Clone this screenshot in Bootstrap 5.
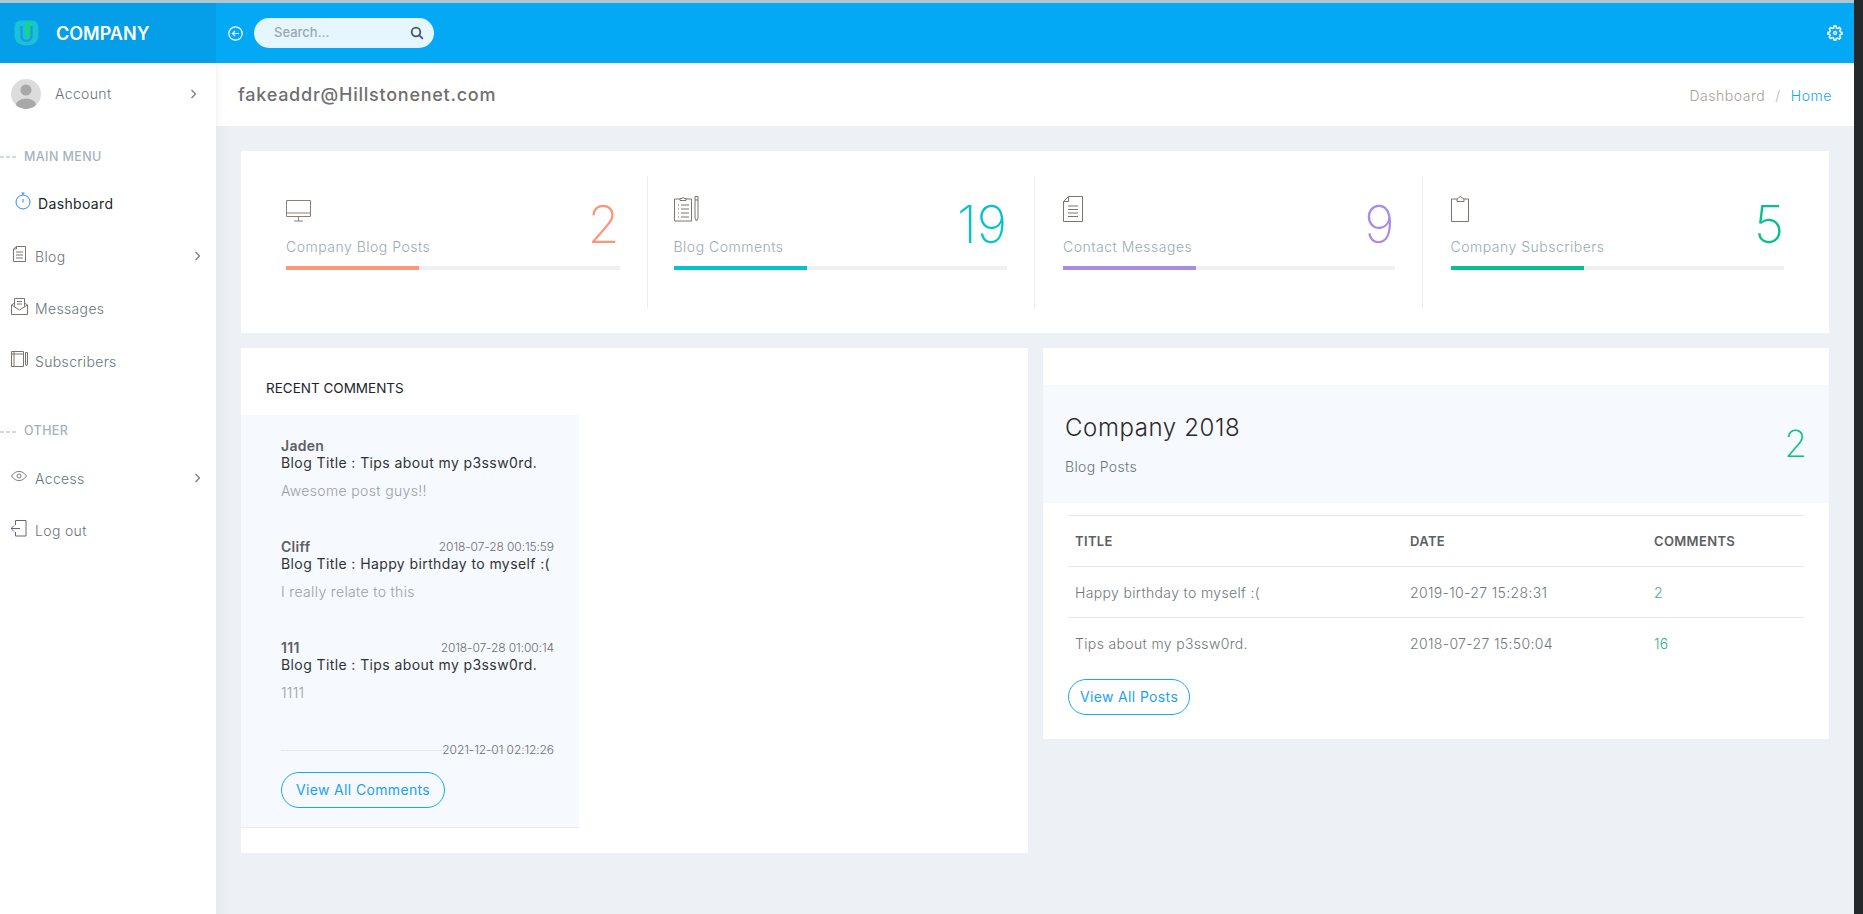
<!DOCTYPE html>
<html lang="en">
<head>
    <meta charset="UTF-8">
    <title>Dashboard</title>
    <link rel="stylesheet" href="https://cdn.jsdelivr.net/npm/bootstrap@5.3.0/dist/css/bootstrap.min.css">
    <style>
        html, body { height: 914px; overflow: hidden; }
        body { font-family: Inter, "Liberation Sans", sans-serif; font-weight: 300; font-size: 14px; letter-spacing: .35px; background: #edf0f5; color: #67757c; }
        svg { display: block; flex: none; }
        .edge-strip { width: 9px; background: #24282a; flex: none; }
        .app-wrap { flex: 1 1 0; min-width: 0; }
        .top-line { height: 3px; background: #b4c6cb; }
        .top-bar { height: 60px; background: #03a9f5; }
        .brand-box { width: 216px; background: #049fe8; padding-left: 14px; gap: 17px; }
        .brand-name { color: #fff; font-size: 18px; font-weight: 600; letter-spacing: 0; }
        .bar-tools { padding-left: 12px; gap: 11px; }
        .search-pill { width: 180px; height: 30px; background: #e5f6fe; border-radius: 15px; padding: 0 10px 0 20px; }
        .search-pill input { border: 0; background: transparent; outline: 0; width: 120px; font-size: 13px; font-weight: 500; padding: 0; color: #67757c; }
        .search-pill input::placeholder { color: #9aa8b0; }
        .gear-btn { margin-left: auto; padding-right: 11px; }
        .app-body { height: 851px; }
        .side-nav { width: 216px; background: #fff; flex: none; }
        .account-row { height: 61px; padding: 0 19px 0 11px; gap: 14px; }
        .account-row .avatar { width: 30px; height: 30px; border-radius: 50%; background: #dcdcdc; overflow: hidden; }
        .side-label { height: 20px; font-size: 12.5px; font-weight: 500; color: #a6b3bb; letter-spacing: .4px; }
        .side-label.first { margin-top: 23px; margin-bottom: 10px; }
        .side-label.second { margin-top: 34px; margin-bottom: 10px; }
        .side-item { height: 52.700px; padding-right: 15px; color: #67757c; text-decoration: none; }
        .side-item.active { color: #212529; font-weight: 400; }
        .side-icon { width: 35px; padding-left: 11px; margin-bottom: 4px; }
        .side-text { flex: 1 1 0; }
        .page-area { flex: 1 1 0; min-width: 0; }
        .page-head { height: 63px; background: #fff; padding: 0 22px; box-shadow: inset 8px 0 8px -8px rgba(0,0,0,.08); }
        .page-title { font-size: 18px; font-weight: 500; color: #6f6f6f; margin: 0; letter-spacing: .75px; }
        .crumbs { --bs-breadcrumb-margin-bottom: 0; --bs-breadcrumb-divider-color: #b5b5b5; --bs-breadcrumb-item-active-color: #1e9ff2; --bs-breadcrumb-item-padding-x: 10px; letter-spacing: .55px; padding-top: 2px; }
        .crumbs a { color: #a79f98; text-decoration: none; }
        .page-body { padding: 25px 25px 0; background: linear-gradient(90deg, #e6e9ee 0, #edf0f5 14px); height: 788px; }
        .stats-card { height: 182px; background: #fff; padding: 25px 19px; }
        .stat-col { width: 25%; height: 132px; padding: 0 27px 0 26px; border-right: 1px solid #eceff2; }
        .stat-col:nth-child(1) { padding: 0 27px 0 26px; }
        .stat-col:nth-child(3) { padding: 0 27px 0 28px; }
        .stat-col:nth-child(4) { padding: 0 26px 0 28px; border-right: 0; }
        .stat-top { height: 90px; }
        .stat-icon { height: 30px; margin-top: 24px; }
        .stat-col.tall .stat-icon { margin-top: 20px; height: 34px; }
        .stat-label { color: #99abb4; margin-top: 7px; line-height: 20px; letter-spacing: .5px; }
        .stat-num { font-size: 52px; font-weight: 250; line-height: 60px; margin: 19px 0 0; letter-spacing: 0; }
        .stat-bar { height: 4px; background: #f0f0f0; }
        .tone-orange { color: #fb9678; }
        .tone-cyan { color: #03c3d0; }
        .tone-purple { color: #ab8ce4; }
        .tone-green { color: #06c18f; }
        .fill-orange { background: #fb9678; }
        .fill-cyan { background: #03c3d0; }
        .fill-purple { background: #ab8ce4; }
        .fill-green { background: #06c18f; }
        .lower-grid { display: grid; grid-template-columns: 787px 786px; gap: 15px; margin-top: 15px; align-items: start; }
        .white-box { background: #fff; }
        .recent-box { height: 505px; }
        .recent-head { height: 67px; padding: 28px 25px 0; font-size: 13.5px; font-weight: 400; color: #212529; letter-spacing: 0; line-height: 25px; margin: 0; }
        .recent-panel { width: 338px; height: 413px; background: #f6f9fd; border-bottom: 1px solid #e7eaee; padding: 22px 25px 0 40px; }
        .comment-item { height: 101px; }
        .comment-top { height: 17px; line-height: 17px; }
        .comment-name { font-weight: 600; color: #5d6064; letter-spacing: .3px; }
        .comment-time { font-size: 12px; color: #6a6f73; letter-spacing: -.1px; }
        .comment-title { font-weight: 400; color: #2f3338; line-height: 17px; letter-spacing: .4px; }
        .comment-text { color: #99a0a6; line-height: 19px; margin-top: 10px; }
        .comment-end { height: 11px; line-height: 17px; border-bottom: 1px solid #e5e8eb; }
        .pill-link { border: 1px solid #1aa7f2; color: #1e9ff2; border-radius: 18px; background: #fff; font-size: 14px; font-weight: 400; height: 36px; line-height: 20px; padding: 7px 11px; --bs-btn-hover-color: #1e9ff2; }
        .recent-panel .pill-link { margin-top: 21px; background: transparent; padding: 7px 14px; }
        .posts-box { height: 391px; padding-top: 37px; }
        .posts-panel { height: 118px; background: #f6f9fd; padding: 0 22px; }
        .posts-name { font-size: 24px; font-weight: 300; color: #2b2b2b; line-height: 30px; margin: 0; padding-top: 28px; letter-spacing: .6px; }
        .posts-sub { color: #67757c; line-height: 20px; margin-top: 14px; }
        .posts-num { font-size: 37px; font-weight: 250; line-height: 44px; margin-top: 37px; letter-spacing: 0; }
        .posts-body { padding: 12px 25px 0; }
        .posts-table { --bs-table-bg: transparent; margin: 0; width: 736px; table-layout: fixed; border-top: 1px solid #e4e6e9; }
        .posts-table th, .posts-table td { height: 51px; padding: 0 7px; vertical-align: middle; border-bottom: 1px solid #e4e6e9; font-weight: 300; color: #6f777c; }
        .posts-table th { font-size: 13px; font-weight: 600; color: #5b6064; padding-top: 1px; }
        .posts-table tr:last-child td { border-bottom: 0; }
        .posts-table td.count { color: #2fae90; }
        .posts-body .pill-link { margin-top: 10px; }
    </style>
</head>
<body class="d-flex">
<div class="app-wrap d-flex flex-column">
    <div class="top-line"></div>
    <nav class="top-bar d-flex">
        <div class="brand-box d-flex align-items-center">
            <svg width="25" height="26" viewBox="0 0 25 26"><path d="M7 .500h11c4 0 6.500 3 6.500 7v9c0 5-5 9-12 9s-12-4-12-9v-9c0-4 2.500-7 6.500-7z" fill="#17c3d6"/><rect x="11" y="2" width="8" height="15" rx="4" fill="#14d58a"/><path d="M7.500 6v10c0 6.500 10 6.500 10 0V6" fill="none" stroke="#2196e8" stroke-width="2.400"/></svg>
            <span class="brand-name">COMPANY</span>
        </div>
        <div class="bar-tools d-flex align-items-center flex-grow-1">
            <svg width="15" height="15" viewBox="0 0 15 15" fill="none" stroke="#fff" stroke-width="1.200"><circle cx="7.500" cy="7.500" r="6.700"/><path d="M11 7.500H4.500M7 5 4.500 7.500 7 10"/></svg>
            <div class="search-pill d-flex align-items-center justify-content-between">
                <input type="text" placeholder="Search...">
                <svg width="14" height="14" viewBox="0 0 14 14" fill="none" stroke="#4a5560" stroke-width="1.800"><circle cx="6" cy="6" r="4.300"/><path d="m9.200 9.200 3.600 3.600"/></svg>
            </div>
            <div class="gear-btn">
                <svg width="16" height="16" viewBox="0 0 16 16" fill="none" stroke="#fff"><circle cx="8" cy="8" r="1.500" stroke-width="1.300"/><path stroke-width="1.400" d="M7 1h2l.4 1.900 1.300.6 1.700-1 1.400 1.400-1 1.700.5 1.300L15 7.300v1.900l-1.900.5-.5 1.300 1 1.600-1.400 1.400-1.700-1-1.300.5L9 15H7l-.4-1.900-1.300-.6-1.700 1-1.400-1.400 1-1.700-.5-1.200L1 9.200V7.300l1.800-.4.5-1.300-1-1.700 1.400-1.400 1.700 1 1.300-.6z"/></svg>
            </div>
        </div>
    </nav>
    <div class="app-body d-flex">
        <aside class="side-nav">
            <div class="account-row d-flex align-items-center">
                <span class="avatar d-block">
                    <svg width="30" height="30" viewBox="0 0 30 30"><circle cx="15" cy="11" r="5.500" fill="#a8a8a8"/><ellipse cx="15" cy="26" rx="10" ry="6.500" fill="#a8a8a8"/></svg>
                </span>
                <span class="side-text">Account</span>
                <svg width="7" height="10" viewBox="0 0 7 10" fill="none" stroke="#67757c" stroke-width="1.100"><path d="m1.500 1 4 4-4 4"/></svg>
            </div>
            <div class="side-label first d-flex align-items-center gap-2">
                <svg width="16" height="2" viewBox="0 0 16 2" stroke="#a6b3bb" stroke-dasharray="4 2"><path d="M0 1h16"/></svg>
                <span>MAIN MENU</span>
            </div>
            <a class="side-item active d-flex align-items-center" href="#">
                <span class="side-icon" style="padding-left:15px;width:38px">
                    <svg width="16" height="18" viewBox="0 0 16 18" fill="none" stroke="#2a8cf0"><circle cx="8" cy="10" r="7"/><path d="M8 3V1M8 7v3.500M6.500 1h3"/></svg>
                </span>
                <span class="side-text">Dashboard</span>
            </a>
            <a class="side-item d-flex align-items-center" href="#">
                <span class="side-icon" style="padding-left:13px">
                    <svg width="13" height="16" viewBox="0 0 13 16" fill="none" stroke="#7a7470"><path d="M3.500 .500h9v15H.500V3zM3.500 .500V3H.500M3 6h7M3 9h7M3 12h7"/></svg>
                </span>
                <span class="side-text">Blog</span>
                <svg width="7" height="10" viewBox="0 0 7 10" fill="none" stroke="#67757c" stroke-width="1.100"><path d="m1.500 1 4 4-4 4"/></svg>
            </a>
            <a class="side-item d-flex align-items-center" href="#">
                <span class="side-icon">
                    <svg width="17" height="17" viewBox="0 0 17 17" fill="none" stroke="#7a7470"><path d="M.500 7v9.500h16V7l-3-2M.500 7l3-2M.500 7l8 5 8-5M3.500 8.500V.500h10v8M6 3.500h5M6 6h5"/></svg>
                </span>
                <span class="side-text">Messages</span>
            </a>
            <a class="side-item d-flex align-items-center" href="#">
                <span class="side-icon">
                    <svg width="17" height="16" viewBox="0 0 17 16" fill="none" stroke="#7a7470"><path d="M.500 .500h12v15H.500zM3 .500v15M14.500 1.500h2V13l-1 2-1-2zM.500 3h12"/></svg>
                </span>
                <span class="side-text">Subscribers</span>
            </a>
            <div class="side-label second d-flex align-items-center gap-2">
                <svg width="16" height="2" viewBox="0 0 16 2" stroke="#a6b3bb" stroke-dasharray="4 2"><path d="M0 1h16"/></svg>
                <span>OTHER</span>
            </div>
            <a class="side-item d-flex align-items-center" href="#">
                <span class="side-icon">
                    <svg width="16" height="10" viewBox="0 0 16 10" fill="none" stroke="#7a7470"><path d="M.500 5C3 1.500 5.500.500 8 .500S13 1.500 15.500 5C13 8.500 10.500 9.500 8 9.500S3 8.500.500 5z"/><circle cx="8" cy="5" r="2"/></svg>
                </span>
                <span class="side-text">Access</span>
                <svg width="7" height="10" viewBox="0 0 7 10" fill="none" stroke="#67757c" stroke-width="1.100"><path d="m1.500 1 4 4-4 4"/></svg>
            </a>
            <a class="side-item d-flex align-items-center" href="#">
                <span class="side-icon">
                    <svg width="16" height="17" viewBox="0 0 16 17" fill="none" stroke="#6a6080"><path d="M4.500 5V.500h10.500v15.500H4.500V12M0 8.500h9M3 5.500l-3 3 3 3"/></svg>
                </span>
                <span class="side-text">Log out</span>
            </a>
        </aside>
        <main class="page-area">
            <div class="page-head d-flex align-items-center justify-content-between">
                <h1 class="page-title">fakeaddr@Hillstonenet.com</h1>
                <ol class="breadcrumb crumbs">
                    <li class="breadcrumb-item"><a href="#">Dashboard</a></li>
                    <li class="breadcrumb-item active">Home</li>
                </ol>
            </div>
            <div class="page-body">
                <section class="stats-card d-flex">
                    <div class="stat-col">
                        <div class="stat-top d-flex justify-content-between">
                            <div>
                                <div class="stat-icon">
                                    <svg width="25" height="22" viewBox="0 0 25 22" fill="none" stroke="#8c7f78"><path d="M.500 .500h24v16H.500zM.500 13h24M12.500 16.500V21M8 21h9"/></svg>
                                </div>
                                <div class="stat-label">Company Blog Posts</div>
                            </div>
                            <p class="stat-num tone-orange">2</p>
                        </div>
                        <div class="stat-bar"><div class="h-100 fill-orange" style="width:40%"></div></div>
                    </div>
                    <div class="stat-col tall">
                        <div class="stat-top d-flex justify-content-between">
                            <div>
                                <div class="stat-icon">
                                    <svg width="25" height="26" viewBox="0 0 25 26" fill="none" stroke="#7c746e"><path d="M6 3H.500v22h17V3H12M6 4.500V2.500h2a1 1 0 0 1 2 0h2v2zM4 9h1M7 9h8M4 13h1M7 13h8M4 17h1M7 17h8M4 21h1M7 21h8M21 .500h3V22l-1.500 3L21 22zM21 4h3"/></svg>
                                </div>
                                <div class="stat-label">Blog Comments</div>
                            </div>
                            <p class="stat-num tone-cyan">19</p>
                        </div>
                        <div class="stat-bar"><div class="h-100 fill-cyan" style="width:40%"></div></div>
                    </div>
                    <div class="stat-col tall">
                        <div class="stat-top d-flex justify-content-between">
                            <div>
                                <div class="stat-icon">
                                    <svg width="20" height="26" viewBox="0 0 20 26" fill="none" stroke="#7c746e"><path d="M5.500 .500h14v25H.500V5.500zM5.500 .500v5h-5M5 10h10M5 13.500h10M5 17h10M5 20.500h10"/></svg>
                                </div>
                                <div class="stat-label">Contact Messages</div>
                            </div>
                            <p class="stat-num tone-purple">9</p>
                        </div>
                        <div class="stat-bar"><div class="h-100 fill-purple" style="width:40%"></div></div>
                    </div>
                    <div class="stat-col tall">
                        <div class="stat-top d-flex justify-content-between">
                            <div>
                                <div class="stat-icon">
                                    <svg width="19" height="26" viewBox="0 0 19 26" fill="none" stroke="#7c746e"><path d="M6 3H.500v22.500h17V3H13M6 5.500V3l3.500-2.500L13 3v2.500z"/></svg>
                                </div>
                                <div class="stat-label">Company Subscribers</div>
                            </div>
                            <p class="stat-num tone-green">5</p>
                        </div>
                        <div class="stat-bar"><div class="h-100 fill-green" style="width:40%"></div></div>
                    </div>
                </section>
                <div class="lower-grid">
                    <section class="white-box recent-box">
                        <h2 class="recent-head">RECENT COMMENTS</h2>
                        <div class="recent-panel">
                            <div class="comment-item">
                                <div class="comment-top d-flex justify-content-between"><span class="comment-name">Jaden</span></div>
                                <div class="comment-title">Blog Title : Tips about my p3ssw0rd.</div>
                                <div class="comment-text">Awesome post guys!!</div>
                            </div>
                            <div class="comment-item">
                                <div class="comment-top d-flex justify-content-between"><span class="comment-name">Cliff</span><span class="comment-time">2018-07-28 00:15:59</span></div>
                                <div class="comment-title">Blog Title : Happy birthday to myself :(</div>
                                <div class="comment-text">I really relate to this</div>
                            </div>
                            <div class="comment-item">
                                <div class="comment-top d-flex justify-content-between"><span class="comment-name">111</span><span class="comment-time">2018-07-28 01:00:14</span></div>
                                <div class="comment-title">Blog Title : Tips about my p3ssw0rd.</div>
                                <div class="comment-text">1111</div>
                            </div>
                            <div class="comment-end text-end"><span class="comment-time">2021-12-01 02:12:26</span></div>
                            <a class="btn pill-link" href="#">View All Comments</a>
                        </div>
                    </section>
                    <section class="white-box posts-box">
                        <div class="posts-panel d-flex justify-content-between">
                            <div>
                                <h2 class="posts-name">Company 2018</h2>
                                <div class="posts-sub">Blog Posts</div>
                            </div>
                            <div class="posts-num tone-green">2</div>
                        </div>
                        <div class="posts-body">
                            <table class="table posts-table">
                                <colgroup><col style="width:335px"><col style="width:244px"><col style="width:157px"></colgroup>
                                <thead><tr><th>TITLE</th><th>DATE</th><th>COMMENTS</th></tr></thead>
                                <tbody>
                                    <tr><td>Happy birthday to myself :(</td><td>2019-10-27 15:28:31</td><td class="count">2</td></tr>
                                    <tr><td>Tips about my p3ssw0rd.</td><td>2018-07-27 15:50:04</td><td class="count">16</td></tr>
                                </tbody>
                            </table>
                            <a class="btn pill-link" href="#">View All Posts</a>
                        </div>
                    </section>
                </div>
            </div>
        </main>
    </div>
</div>
<div class="edge-strip"></div>
<script src="https://cdn.jsdelivr.net/npm/bootstrap@5.3.0/dist/js/bootstrap.bundle.min.js"></script>
</body>
</html>
